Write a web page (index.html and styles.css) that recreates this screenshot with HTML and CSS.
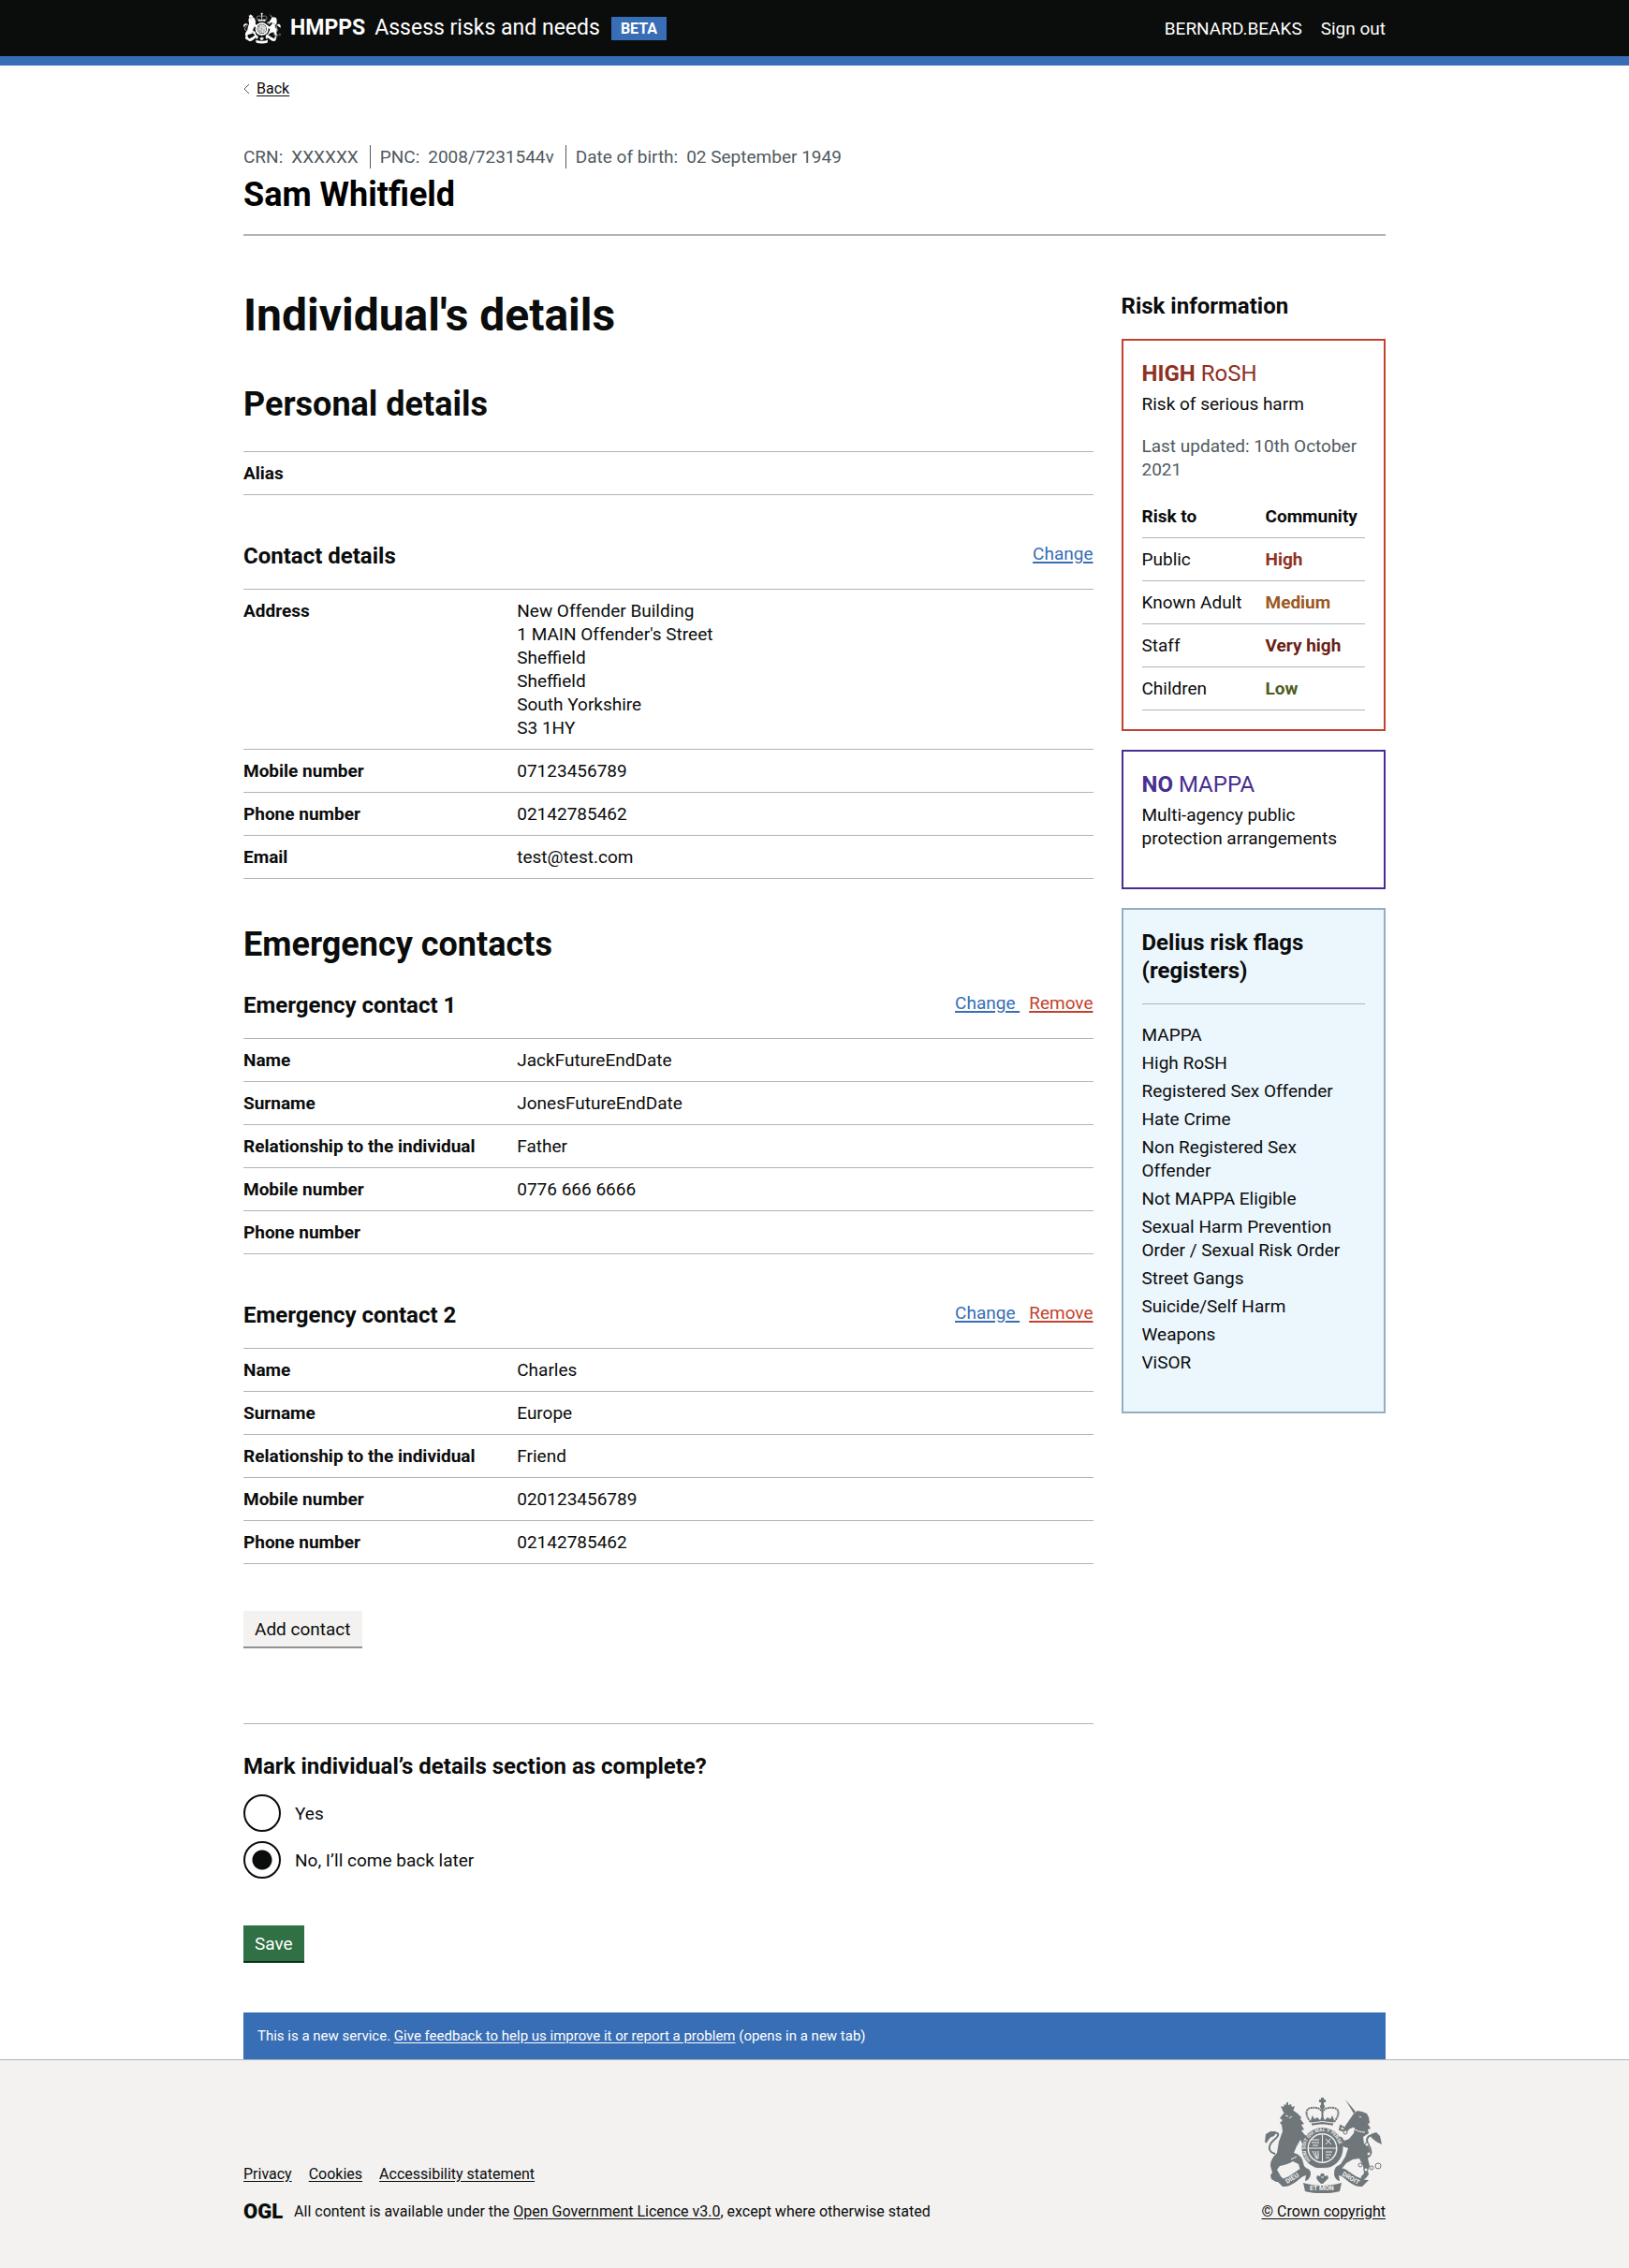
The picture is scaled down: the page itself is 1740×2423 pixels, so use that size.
FILE: index.html
```html
<!DOCTYPE html>
<html lang="en">
<head>
<meta charset="utf-8">
<meta name="viewport" content="width=device-width, initial-scale=1">
<title>Individual's details</title>
<link rel="stylesheet" href="styles.css">
</head>
<body>
<svg class="sprite" aria-hidden="true">
  <symbol id="crest" viewBox="0 0 125 102">
    <g class="crest-ink">
      <!-- royal crown -->
      <path d="M60 0h3v2h2v3h-2v3h-3V5h-2V2h2z"/>
      <circle cx="61.500" cy="9.500" r="2.500"/>
      <path class="crest-line" d="M49 26c-6-7-6-14 0-15s9 0 12.500 4c3.500-4 6.500-5 12.500-4s6 8 0 15" stroke-dasharray="2 .6"/>
      <path class="crest-line" d="M61.500 10v12"/>
      <path d="M49 24l2-5 2 4 3-2 3 3 2.500-5 2.500 5 3-3 3 2 2-4 2 5-1.500 6c-6-2-16-2-22 0z"/>
      <!-- lion -->
      <path d="M17 9l3 1 1-3 2 1V5h2v3l3-1 1 3 3-1-2 6-10 1z"/>
      <path d="M19 18l3-3 9-1 4 3 4 4-1 2 4 5-3 1 3 5-3 1 3 4c3 2 5 5 5 9l-2 5-4-2-3-6-4 7-3 7c4 1 8 4 9 7l2 7 2 2-1 3h-5l-2-7-6-3c-5 3-9 4-14 5l-3 4 4 7 3 3-2 3h-6l-5-3-1-4 2-3-2-7c0-6 3-10 7-14l2-12 4-11-1-7-2-2 3-3-3-2z"/>
      <path class="crest-line" d="M11 60c-8-2-8-9-1-15 5-4 6-8 1-7-5 2-8 6-10 10"/>
      <path d="M0 48l1-9 5-3h6l-2 5-6 2z"/>
      <!-- unicorn -->
      <path d="M86 2l11 13-2 2z"/>
      <path d="M95 17l4-3 5 1 5 2 2 4 1 6-2 1 3 5-3 1 1 4-6 4 1 7 5 4c2 4 2 8-1 12l2 8-2 5 1 4-3 4-6 3 1-5 3-3-1-8-4-8-7 1-7 4-5 6-5 3-3-1 2-4 5-3 5-8 3-9-6-2-3-5-5-2v-4l7 1 3 4 5-2 5-6 1-6-5 1-3 3-4-1 2-5z"/>
      <path class="crest-line" d="M107 63c7 1 8-6 4-12s-1-12 5-10l4 3"/>
      <path d="M113 39l6-2 4 4 2 9-6-3-5-4z"/>
      <path class="crest-line" d="M86 36l-6-2 1-4 5 3M83 50l-4-4"/>
      <!-- garter and shield -->
      <circle cx="61.500" cy="54" r="22"/>
      <!-- motto ribbons -->
      <path d="M12 88c9 0 17-6 24-11 6-3 13-2 13 4 0 4-3 8-6 8l1-6-3 1c-6 4-13 12-22 11z"/>
      <path d="M111 88c-9 0-17-6-24-11-6-3-13-2-13 4 0 4 3 8 6 8l-1-6 3 1c6 4 13 12 22 11z"/>
      <path d="M41 91c13 4 28 4 41 0l-2 9c-11 3-26 3-37 0z"/>
      <path d="M60 81h3l1 3 3-1 1 3-3 3-3 3h-2l-3-3-2-3 1-3 3 1z"/>
    </g>
    <g class="crest-gap">
      <circle cx="61.500" cy="54" r="16"/>
    </g>
    <g class="crest-ink">
      <circle cx="61.500" cy="54" r="14.500"/>
    </g>
    <g class="crest-cut">
      <path d="M61.500 39.500v29M47 54h29"/>
      <path d="M50 45h8M50 48h8M51 51h6M65 44l6 6M65 50l5-6M51 57l4 8M54 57l2 9M57 57v8M65 58h7M65 61h6M65 64h4"/>
      <path d="M22 19l3 1M29 20l-3 2M28 66l6-3M101 20l2 1M93 32c4 3 9 5 14 5M50 27q11-3 23 0"/>
      <path d="M52 76l19-1M60 85h3"/>
    </g>
    <g class="crest-link">
      <circle cx="86" cy="37" r="2"/><circle cx="109" cy="50" r="2"/><circle cx="111" cy="60" r="2"/>
      <circle cx="102" cy="72" r="2"/><circle cx="108" cy="77" r="2"/><circle cx="114" cy="75" r="2"/><circle cx="121" cy="73" r="3"/>
    </g>
  </symbol>
</svg>

<header class="header">
  <div class="container header-inner">
    <div class="brand">
      <svg class="brand-crest" aria-hidden="true"><use href="#crest"/></svg>
      <a class="brand-link" href="#"><strong>HMPPS</strong><span>Assess risks and needs</span></a>
      <strong class="tag">BETA</strong>
    </div>
    <nav class="user-nav" aria-label="Account">
      <span>BERNARD.BEAKS</span>
      <a href="#">Sign out</a>
    </nav>
  </div>
</header>

<div class="container">
  <a class="back-link" href="#"><svg class="chevron" viewBox="0 0 7 12" aria-hidden="true"><path d="M6 1L1 6l5 5"/></svg><span>Back</span></a>

  <section class="person" aria-label="Individual">
    <dl class="identifiers">
      <div><dt>CRN:</dt><dd>XXXXXX</dd></div>
      <div><dt>PNC:</dt><dd>2008/7231544v</dd></div>
      <div><dt>Date of birth:</dt><dd>02 September 1949</dd></div>
    </dl>
    <p class="person-name">Sam Whitfield</p>
  </section>

  <div class="columns">
    <main class="column-main">
      <h1 class="heading-xl">Individual's details</h1>

      <h2 class="heading-l">Personal details</h2>
      <dl class="summary summary-wide">
        <div class="row"><dt>Alias</dt><dd></dd></div>
      </dl>

      <div class="section-head">
        <h3 class="heading-m">Contact details</h3>
        <div class="actions"><a class="link" href="#">Change</a></div>
      </div>
      <dl class="summary">
        <div class="row"><dt>Address</dt><dd>New Offender Building<br>1 MAIN Offender's Street<br>Sheffield<br>Sheffield<br>South Yorkshire<br>S3 1HY</dd></div>
        <div class="row"><dt>Mobile number</dt><dd>07123456789</dd></div>
        <div class="row"><dt>Phone number</dt><dd>02142785462</dd></div>
        <div class="row"><dt>Email</dt><dd>test@test.com</dd></div>
      </dl>

      <h2 class="heading-l">Emergency contacts</h2>
      <div class="section-head section-head-first">
        <h3 class="heading-m">Emergency contact 1</h3>
        <div class="actions"><a class="link" href="#">Change&nbsp;</a><a class="link link-remove" href="#">Remove</a></div>
      </div>
      <dl class="summary">
        <div class="row"><dt>Name</dt><dd>JackFutureEndDate</dd></div>
        <div class="row"><dt>Surname</dt><dd>JonesFutureEndDate</dd></div>
        <div class="row"><dt>Relationship to the individual</dt><dd>Father</dd></div>
        <div class="row"><dt>Mobile number</dt><dd>0776 666 6666</dd></div>
        <div class="row"><dt>Phone number</dt><dd></dd></div>
      </dl>

      <div class="section-head">
        <h3 class="heading-m">Emergency contact 2</h3>
        <div class="actions"><a class="link" href="#">Change&nbsp;</a><a class="link link-remove" href="#">Remove</a></div>
      </div>
      <dl class="summary">
        <div class="row"><dt>Name</dt><dd>Charles</dd></div>
        <div class="row"><dt>Surname</dt><dd>Europe</dd></div>
        <div class="row"><dt>Relationship to the individual</dt><dd>Friend</dd></div>
        <div class="row"><dt>Mobile number</dt><dd>020123456789</dd></div>
        <div class="row"><dt>Phone number</dt><dd>02142785462</dd></div>
      </dl>

      <button class="button button-secondary" type="button">Add contact</button>

      <form class="complete-form">
        <fieldset class="fieldset">
          <legend class="heading-m">Mark individual’s details section as complete?</legend>
          <div class="radios">
            <div class="radio"><input type="radio" id="complete-yes" name="complete"><label for="complete-yes">Yes</label></div>
            <div class="radio"><input type="radio" id="complete-no" name="complete" checked><label for="complete-no">No, I’ll come back later</label></div>
          </div>
        </fieldset>
        <button class="button button-primary" type="submit">Save</button>
      </form>
    </main>

    <aside class="column-side">
      <h2 class="heading-m">Risk information</h2>

      <section class="card card-rosh">
        <h3 class="card-title"><strong>HIGH</strong> RoSH</h3>
        <p>Risk of serious harm</p>
        <p class="updated">Last updated: 10th October 2021</p>
        <table class="risk-table">
          <thead><tr><th scope="col">Risk to</th><th scope="col">Community</th></tr></thead>
          <tbody>
            <tr><td>Public</td><td class="level level-high">High</td></tr>
            <tr><td>Known Adult</td><td class="level level-medium">Medium</td></tr>
            <tr><td>Staff</td><td class="level level-very-high">Very high</td></tr>
            <tr><td>Children</td><td class="level level-low">Low</td></tr>
          </tbody>
        </table>
      </section>

      <section class="card card-mappa">
        <h3 class="card-title"><strong>NO</strong> MAPPA</h3>
        <p>Multi-agency public protection arrangements</p>
      </section>

      <section class="card card-flags">
        <h3 class="heading-m">Delius risk flags (registers)</h3>
        <ul class="flags">
          <li>MAPPA</li>
          <li>High RoSH</li>
          <li>Registered Sex Offender</li>
          <li>Hate Crime</li>
          <li>Non Registered Sex Offender</li>
          <li>Not MAPPA Eligible</li>
          <li>Sexual Harm Prevention Order / Sexual Risk Order</li>
          <li>Street Gangs</li>
          <li>Suicide/Self Harm</li>
          <li>Weapons</li>
          <li>ViSOR</li>
        </ul>
      </section>
    </aside>
  </div>

  <p class="feedback">This is a new service. <a href="#">Give feedback to help us improve it or report a problem</a> (opens in a new tab)</p>
</div>

<footer class="footer">
  <div class="container footer-inner">
    <div class="footer-meta">
      <ul class="footer-links">
        <li><a href="#">Privacy</a></li>
        <li><a href="#">Cookies</a></li>
        <li><a href="#">Accessibility statement</a></li>
      </ul>
      <div class="licence">
        <strong class="ogl">OGL</strong>
        <span>All content is available under the <a href="#">Open Government Licence v3.0</a>, except where otherwise stated</span>
      </div>
    </div>
    <div class="copyright">
      <svg class="footer-crest" viewBox="0 0 125 102" aria-hidden="true">
        <use href="#crest" width="125" height="102"/>
        <path id="garter" class="garter-path" d="M49 67a18 18 0 1 1 25 0"/>
        <text class="motto"><textPath href="#garter">HONI SOIT QUI MAL Y PENSE</textPath></text>
        <text class="motto motto-ribbon" x="24" y="92" transform="rotate(-32 24 92)">DIEU</text>
        <text class="motto motto-ribbon" x="48" y="99">ET MON</text>
        <text class="motto motto-ribbon" x="82" y="83" transform="rotate(30 82 83)">DROIT</text>
      </svg>
      <a href="#">© Crown copyright</a>
    </div>
  </div>
</footer>
</body>
</html>
```
FILE: styles.css
```css
:root {
  --ink: #0b0c0c;
  --muted: #505a5f;
  --line: #b1b4b6;
  --blue: #386eb5;
  --red: #c2432d;
  --purple: #492e91;
  --green: #2f7044;
  --panel: #f3f2f1;
}

* { box-sizing: border-box; }

body {
  margin: 0;
  color: var(--ink);
  background: #fff;
  font-family: Roboto, "Liberation Sans", sans-serif;
  font-size: 19px;
  line-height: 25px;
}

h1, h2, h3, p, dl, dd, ul { margin: 0; padding: 0; }
ul { list-style: none; }
a { color: inherit; text-underline-offset: 2px; }

.container {
  max-width: 1220px;
  margin: 0 auto;
}

.sprite { display: block; width: 0; height: 0; }

/* Crest artwork */
.crest-ink { fill: currentColor; }
.crest-line { fill: none; stroke: currentColor; stroke-width: 2; }
.crest-gap { fill: var(--crest-bg); }
.crest-cut { fill: none; stroke: var(--crest-bg); stroke-width: 1; }
.crest-link { fill: var(--crest-bg); stroke: currentColor; stroke-width: 1; }

/* Header */
.header {
  color: #fff;
  background: var(--ink);
  border-bottom: 10px solid var(--blue);
}
.header-inner {
  display: flex;
  justify-content: space-between;
  align-items: center;
  height: 60px;
}
.header a { text-decoration: none; }
.brand { display: flex; align-items: center; }
.brand-crest {
  --crest-bg: var(--ink);
  width: 40px;
  height: 34px;
  margin-right: 10px;
}
.brand-link {
  display: flex;
  gap: 10px;
  margin-right: 12px;
  font-size: 23px;
  line-height: 30px;
}
.tag {
  padding: 0 10px;
  background: var(--blue);
  font-size: 16px;
}
.user-nav { display: flex; gap: 20px; }

/* Individual */
.back-link {
  display: flex;
  align-items: center;
  gap: 7px;
  width: max-content;
  margin-top: 15px;
  font-size: 16px;
  line-height: 20px;
}
.chevron {
  width: 7px;
  height: 12px;
  fill: none;
  stroke: var(--muted);
}
.person {
  margin-top: 50px;
  padding-bottom: 22px;
  border-bottom: 2px solid var(--line);
}
.identifiers { display: flex; color: var(--muted); }
.identifiers div { display: flex; gap: 9px; }
.identifiers div + div {
  margin-left: 12px;
  padding-left: 10px;
  border-left: 1px solid var(--muted);
}
.person-name {
  margin-top: 8px;
  color: #000;
  font-size: 36px;
  font-weight: 700;
  line-height: 40px;
}

/* Columns */
.columns {
  display: flex;
  margin: 60px -15px 0;
}
.column-main { width: 75%; padding: 0 15px; }
.column-side { width: 25%; padding: 0 15px; }

.heading-xl { font-size: 48px; line-height: 50px; }
.heading-l { margin-top: 50px; font-size: 36px; line-height: 40px; }
.heading-m { font-size: 24px; font-weight: 700; line-height: 30px; }

.section-head {
  display: flex;
  justify-content: space-between;
  margin-top: 50px;
}
.section-head-first { margin-top: 30px; }
.actions { display: flex; gap: 10px; }
.link { color: var(--blue); text-decoration-thickness: 2px; }
.link-remove { color: var(--red); }

.summary {
  margin-top: 20px;
  border-top: 1px solid var(--line);
}
.summary-wide { margin-top: 30px; }
.row {
  display: grid;
  grid-template-columns: 30% 1fr;
  column-gap: 20px;
  padding: 10px 0;
  border-bottom: 1px solid var(--line);
}
.row dt { font-weight: 700; }

/* Controls */
.button {
  display: block;
  height: 40px;
  padding: 0 12px 2px;
  border: 0;
  font: inherit;
}
.button-secondary {
  margin-top: 50px;
  color: var(--ink);
  background: var(--panel);
  box-shadow: inset 0 -2px #929191;
}
.button-primary {
  margin-top: 50px;
  color: #fff;
  background: var(--green);
  box-shadow: inset 0 -2px #0d2d19;
}
.complete-form {
  margin-top: 80px;
  padding-top: 30px;
  border-top: 1px solid var(--line);
}
.fieldset { margin: 0; padding: 0; border: 0; }
.fieldset legend { padding: 0; }
.radios {
  display: flex;
  flex-direction: column;
  gap: 10px;
  margin-top: 15px;
}
.radio { display: flex; align-items: center; gap: 15px; }
.radio input {
  appearance: none;
  width: 40px;
  height: 40px;
  margin: 0;
  border: 2px solid var(--ink);
  border-radius: 50%;
}
.radio input:checked {
  background: radial-gradient(circle, var(--ink) 10px, transparent 11px);
}

/* Risk cards */
.card {
  margin-top: 20px;
  padding: 20px;
  border: 2px solid;
}
.card p { color: var(--ink); }
.card-title {
  margin-bottom: 5px;
  font-size: 24px;
  font-weight: 400;
  line-height: 30px;
}
.card-rosh { border-color: var(--red); }
.card-rosh .card-title { color: #8f3122; }
.card-rosh .updated { margin: 20px 0 15px; color: var(--muted); }
.card-mappa { padding-bottom: 40px; border-color: var(--purple); }
.card-mappa .card-title { color: var(--purple); }
.card-flags {
  padding-bottom: 40px;
  background: #ebf6fd;
  border-color: #94adc0;
}
.flags {
  display: grid;
  row-gap: 5px;
  margin-top: 20px;
  padding-top: 20px;
  border-top: 1px solid var(--line);
}
.risk-table {
  width: 100%;
  border-collapse: separate;
  border-spacing: 0;
}
.risk-table th,
.risk-table td {
  padding: 10px 0;
  border-bottom: 1px solid var(--line);
  text-align: left;
}
.risk-table th:first-child { width: 132px; }
.level { font-weight: 700; }
.level-high { color: #8f3122; }
.level-medium { color: #9c581f; }
.level-very-high { color: #6b2015; }
.level-low { color: #4c5c21; }

/* Feedback and footer */
.feedback {
  margin-top: 53px;
  padding: 15px;
  color: #fff;
  background: var(--blue);
  font-size: 15px;
  line-height: 20px;
}
.footer {
  padding: 40px 0 50px;
  background: var(--panel);
  border-top: 1px solid var(--line);
  font-size: 16px;
  line-height: 20px;
}
.footer-inner {
  display: flex;
  justify-content: space-between;
  align-items: flex-end;
}
.footer-links { display: flex; gap: 18px; margin-bottom: 20px; }
.licence { display: flex; align-items: center; gap: 12px; }
.ogl {
  font-size: 22px;
  font-weight: 900;
  line-height: 20px;
}
.copyright {
  display: flex;
  flex-direction: column;
  align-items: center;
  gap: 10px;
}
.footer-crest {
  --crest-bg: var(--panel);
  width: 125px;
  height: 102px;
  color: #6f777b;
}
.garter-path { fill: none; }
.motto {
  fill: var(--panel);
  font-size: 5px;
  font-weight: 700;
}
.motto-ribbon { font-size: 7px; }
```
